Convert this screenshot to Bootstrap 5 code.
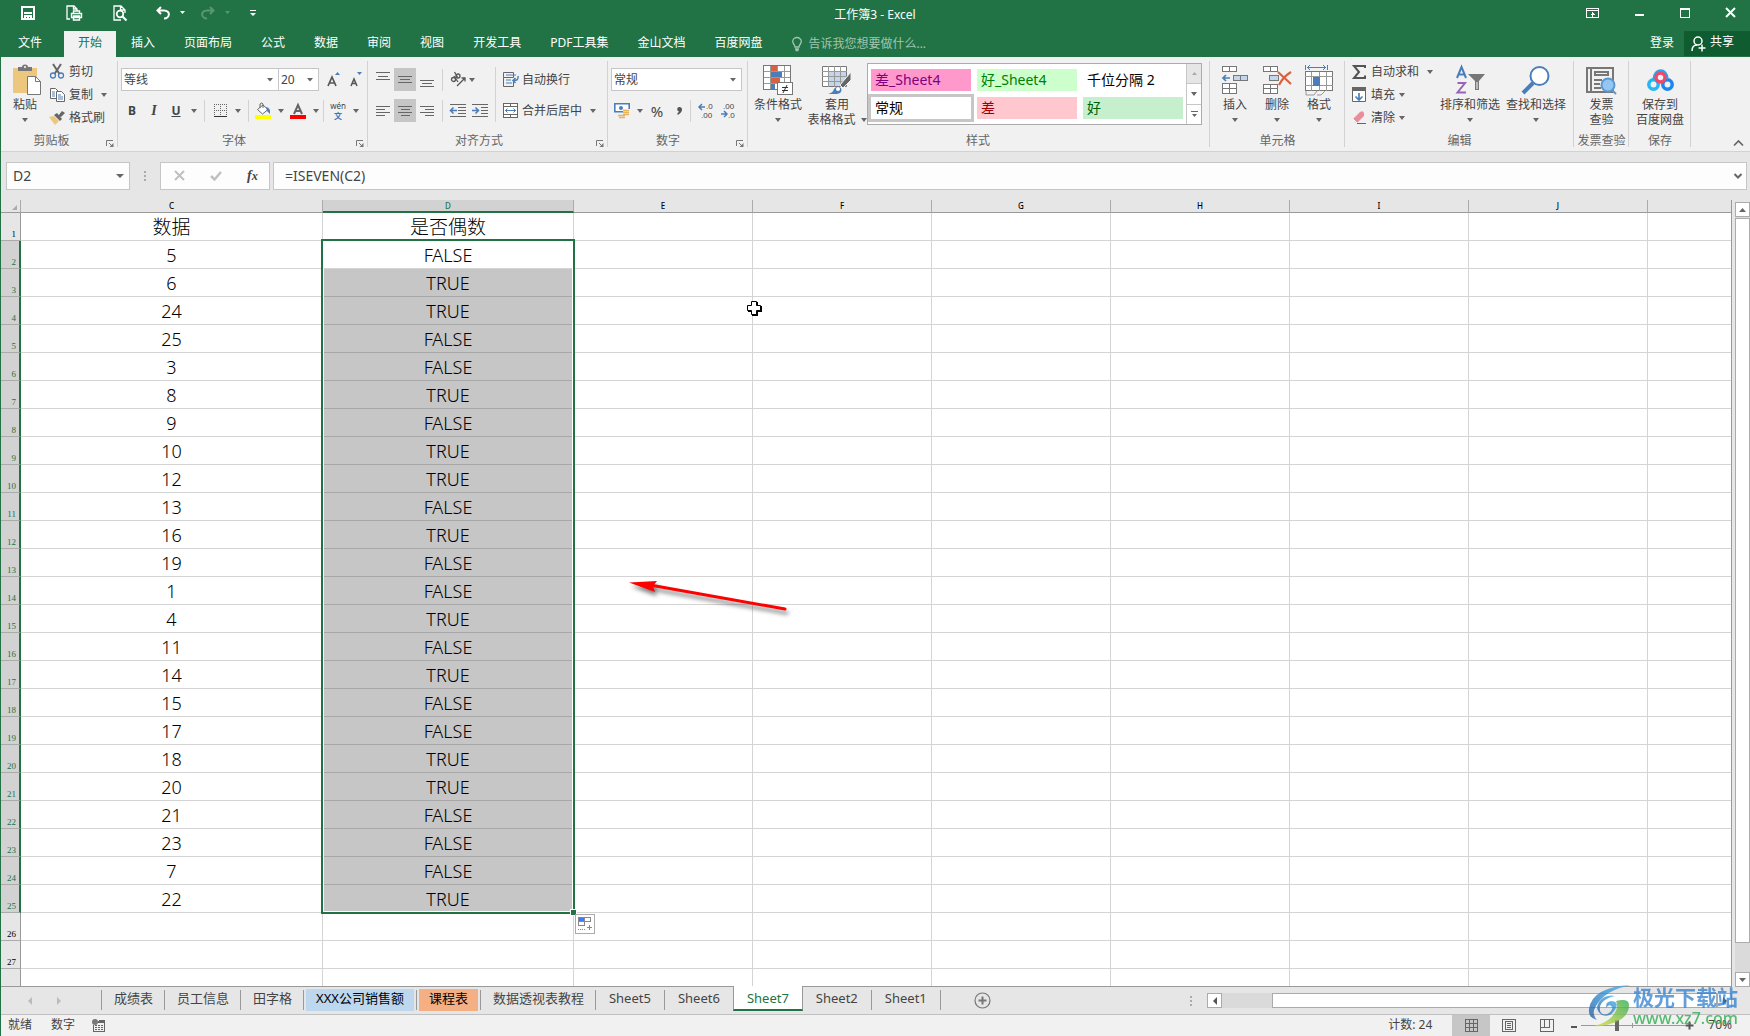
<!DOCTYPE html>
<html lang="zh-CN">
<head>
<meta charset="utf-8">
<meta name="viewport" content="width=device-width, initial-scale=1">
<title>工作簿3 - Excel</title>
<link rel="stylesheet" href="https://cdn.jsdelivr.net/npm/bootstrap@5.3.0/dist/css/bootstrap.min.css">
<style>
:root{--xl:#217346;--ln:#d4d4d4;--caret:url("data:image/svg+xml,%3Csvg xmlns='http://www.w3.org/2000/svg' width='6' height='4'%3E%3Cpath d='M0 0h6L3 3.5z' fill='%23666'/%3E%3C/svg%3E");--caret-lg:url("data:image/svg+xml,%3Csvg xmlns='http://www.w3.org/2000/svg' width='8' height='4'%3E%3Cpath d='M0 0h8L4 4z' fill='%23666'/%3E%3C/svg%3E")}
body{font:12px/16px "Noto Sans","Noto Sans CJK SC",sans-serif;color:#444;background:#e6e6e6;overflow:hidden}
button{border:0;background:none;padding:0;color:inherit;font:inherit}
svg{display:block;flex:none;overflow:visible}
.xl-top{background:var(--xl);color:#fff;flex:none}
.title-row{height:31px}
.quick{gap:16px;padding-left:21px;padding-bottom:5px}
.quick-files{gap:31px;margin-right:12px}
.quick button{height:16px}
.win{gap:34px;padding-right:14px;padding-bottom:5px}
.doc-title{left:50%;transform:translateX(-50%);top:7px}
.tabs-row{height:26px;padding-left:4px}
.xtab{padding:4px 14px;color:#fff;text-decoration:none;margin-right:1px;height:26px;white-space:nowrap}
.xtab.on{background:#f1f1f1;color:var(--xl)}
.tell{color:#a0c5b0;padding-left:15px;gap:6px}
.share{background:#0e5c2f;height:25px;width:66px;padding-left:7px;gap:5px}
.app-body{border-left:1px solid var(--xl);min-height:0}
.ribbon{background:#f1f1f1;height:95px;border-bottom:1px solid #d2d2d2;flex:none}
.grp{position:relative;flex:none;padding:3px 0 0;height:91px}
.grp::after{content:"";position:absolute;right:0;top:4px;height:86px;width:1px;background:#d2d2d2}
.g-body{height:73px}
.g-name{height:15px;color:#666;text-align:center}
.launch{position:absolute;right:4px;bottom:1px}
.big{display:flex;flex-direction:column;align-items:center;flex:none;text-align:center;line-height:15px}
.big .ico{height:33px;display:flex;align-items:center;padding-top:6px;margin-bottom:4px;justify-content:center}
.big .dn{height:15px;display:flex;align-items:center}
.sm{display:flex;align-items:center;height:23px;gap:4px;white-space:nowrap}
.sm .ic16{width:16px;display:flex;justify-content:center}
.cr{display:inline-block;width:0;height:0;border:3px solid transparent;border-top:4px solid #666;border-bottom:0;flex:none}
.tool-rows{padding-top:8px;gap:8px}
.tool-rows .rw{height:23px;display:flex;align-items:center}
.tb{height:23px;width:22px;display:flex;align-items:center;justify-content:center;flex:none}
.tb.nar{width:13px}.tb.slim{width:7px}.tb.wide{width:28px}
.tb.on{background:#c6c6c6}
.vsep{width:1px;background:#d2d2d2;height:22px;flex:none}
.fsel{appearance:none;height:23px;border:1px solid #c6c6c6;background:#fff var(--caret) no-repeat right 5px center;padding:0 2px;font:inherit;color:#444;border-radius:0}
.gallery{border:1px solid #ababab;background:#fff;width:335px;height:62px;margin:3px 0 0 1px}
.styles-grid{display:grid;grid-template-columns:repeat(3,106px);grid-template-rows:28px 28px;font-size:14px;padding-top:2px}
.sty{border:3px solid transparent;background-clip:padding-box;text-align:left;padding-left:4px;line-height:20px;color:#000}
.sty.bad4{background-color:#ff99cc;color:#800080}.sty.good4{background-color:#ccffcc;color:#008000}
.sty.bad{background-color:#ffc7ce;color:#9c0006}.sty.good{background-color:#c6efce;color:#006100}
.sty.cur{border-color:#c6c6c6;background:#fff}
.gal-nav{width:15px;border-left:1px solid #c6c6c6}
.gal-nav button{flex:1;display:flex;align-items:center;justify-content:center;border-bottom:1px solid #c6c6c6}
.fbar{height:48px;padding:10px 3px 0 5px;flex:none}
.fbox{height:28px;background-color:#fdfdfd;border:1px solid #c6c6c6;font-size:14px;color:#444;border-radius:0}
.namebox{background-image:var(--caret-lg);padding-left:6px;width:124px}
.sheet-wrap{flex:1 1 0;min-height:0}
.grid-pane{overflow:hidden;border-right:1px solid #999;border-bottom:1px solid #999}
.xgrid{table-layout:fixed;border-collapse:separate;border-spacing:0;width:100%}
.xgrid th,.xgrid td{padding:0;text-align:center;height:28px;border-right:1px solid var(--ln);border-bottom:1px solid var(--ln);line-height:26px;overflow:hidden}
.xgrid td{font-size:18px;font-weight:300;color:#000;background:#fff}
.xgrid td.cap{font-size:19px}
.xgrid thead th{height:13px;line-height:12px;font-size:8px;font-weight:500;color:#000;background:#e6e6e6;border-color:#ababab;border-bottom-color:#999}
.xgrid thead th.pick{background:#d2d2d2;color:var(--xl);border-bottom:2px solid var(--xl);line-height:11px}
.xgrid tbody th{font:9px/10px "Liberation Serif",serif;vertical-align:bottom;text-align:right;padding-right:4px;padding-bottom:1px;color:#000;background:#e6e6e6;border-color:#ababab;border-right-color:#999}
.xgrid tbody th.pick{background:#d2d2d2;color:var(--xl);border-right:2px solid var(--xl);padding-right:3px}
.xgrid td.sel{background:#c6c6c6;border-bottom-color:#a6a6a6}
.range{left:320px;top:39px;width:254px;height:675px;border:2px solid var(--xl);box-shadow:inset 0 0 0 1px #fff;pointer-events:none}
.handle{right:-4px;bottom:-4px;width:7px;height:7px;background:var(--xl);border:1px solid #fff}
.autofill{left:574px;top:714px;width:20px;height:20px;background:#fff;border:1px solid #ababab}
.ptr{left:745px;top:100px}
.redarrow{left:625px;top:376px}
.vbar{width:18px;padding:2px 0 0 3px}
.sbtn{width:15px;height:15px;border:1px solid #ababab;background:#fff;display:flex;align-items:center;justify-content:center;flex:none}
.thumb{background:#fff;border:1px solid #ababab}
.track{background:#dadada}
.sheetbar{height:28px;border-bottom:1px solid #c0c0c0;flex:none}
.stabs{height:27px;padding-top:3px}
.stab{height:20px;padding:0 11px 0 12px;border-left:1px solid #999;font-size:13px;line-height:17px;color:#444;text-decoration:none;white-space:nowrap}
.stab.lat{padding:0 13px}
.stab span{display:block}
.stab.tint{padding:0 2px}
.stab.tint span{height:22px;margin-top:-1px;line-height:19px;color:#000;padding:0 10px}
.stab.now{background:#fff;color:var(--xl);height:25px;margin-top:-4px;line-height:25px;border-right:1px solid #999;border-bottom:2px solid var(--xl);z-index:2}
.stab.noline{border-left:0}
.statusbar{background:#f1f1f1;height:21px;flex:none}
.statusbar span{padding-bottom:2px}
.view{width:38px;height:21px;display:flex;align-items:center;justify-content:center}
.view.on{background:#c6c6c6}
.zoomr{appearance:none;width:104px;height:11px;background:linear-gradient(#999,#999) 0 5px/100% 1px no-repeat,linear-gradient(#999,#999) 51px 3px/1px 5px no-repeat;margin:0}
.zoomr::-webkit-slider-thumb{appearance:none;width:4px;height:11px;background:#666}
.wmark{right:12px;bottom:9px;opacity:.75;gap:1px;pointer-events:none}
.wm-cn{font-size:21px;line-height:23px;font-weight:700;color:#2f7fd0}
.wm-en{font-size:16px;line-height:18px;color:#22a845;font-weight:500}
</style>
<script src="https://cdn.jsdelivr.net/npm/bootstrap@5.3.0/dist/js/bootstrap.bundle.min.js"></script>
</head>
<body class="vh-100 d-flex flex-column position-relative">
<header class="xl-top">
  <div class="title-row d-flex justify-content-between position-relative">
    <div class="quick d-flex align-items-center">
      <div class="quick-files d-flex align-items-center">
      <button aria-label="保存"><svg width="14" height="14" fill="none" stroke="#fff" stroke-width="2"><path d="M1 1h12v12H1zM3 7h8"/><path d="M4 13v-3h6v3M7 10v3" /></svg></button>
      <button aria-label="快速打印"><svg width="16" height="16" fill="none" stroke="#fff" stroke-width="1.3"><path d="M4 14H1V1h7l3 3v2M7.500 1v3H11"/><path d="M5.500 8.500h10v4h-10zM7.500 8V6h6v2M7.500 11h6v4h-6z" stroke-width="1.4"/></svg></button>
      <button aria-label="打印预览"><svg width="15" height="16" fill="none" stroke="#fff" stroke-width="1.300"><path d="M2 15H1V1h7l4 4v3M7.500 1v4H12M1 15h7"/><circle cx="7" cy="9" r="3.300" stroke-width="1.700"/><path d="M9.500 11.500l4 4" stroke-width="2.200"/></svg></button>
      </div>
      <div class="d-flex align-items-center" style="gap:10px"><button aria-label="撤消"><svg width="14" height="13" fill="none" stroke="#fff" stroke-width="2"><path d="M5 0L1.500 3.500 5 7M2 3.500h6c7 0 6 8 0 8"/></svg></button><svg width="5" height="4"><path d="M0 0h5L2.500 3z" fill="#fff"/></svg></div>
      <div class="d-flex align-items-center opacity-25" style="gap:10px"><button aria-label="恢复"><svg width="14" height="13" fill="none" stroke="#fff" stroke-width="2"><path d="M9 0l3.500 3.500L9 7M12 3.500H6c-7 0-6 8 0 8"/></svg></button><svg width="5" height="4"><path d="M0 0h5L2.500 3z" fill="#fff"/></svg></div>
      <button class="d-flex align-items-center ms-1" aria-label="自定义"><svg width="6" height="6" fill="#fff"><path d="M0 0h6v1H0zM0 3h6L3 6z"/></svg></button>
    </div>
    <div class="doc-title position-absolute">工作簿3 - Excel</div>
    <div class="win d-flex align-items-center">
      <button aria-label="功能区显示选项"><svg width="13" height="10" fill="none" stroke="#fff" shape-rendering="crispEdges"><path d="M.5.5h12v9H.5zM0 2.500h13M6.500 4v5M4.500 6.500h4M5.500 5.500h2"/></svg></button>
      <button aria-label="最小化"><svg width="12" height="10"><path d="M2 6h9v2H2z" fill="#fff"/></svg></button>
      <button aria-label="最大化"><svg width="12" height="10" fill="none" stroke="#fff" shape-rendering="crispEdges"><path d="M1.500.5h9v9h-9zM1 1.500h10"/></svg></button>
      <button aria-label="关闭"><svg width="11" height="10" stroke="#fff" stroke-width="2"><path d="M1 0l9 9M10 0L1 9"/></svg></button>
    </div>
  </div>
  <nav class="tabs-row d-flex">
    <a class="xtab me-2" href="#">文件</a><a class="xtab on" href="#">开始</a><a class="xtab" href="#">插入</a><a class="xtab" href="#">页面布局</a><a class="xtab" href="#">公式</a><a class="xtab" href="#">数据</a><a class="xtab" href="#">审阅</a><a class="xtab" href="#">视图</a><a class="xtab" href="#">开发工具</a><a class="xtab" href="#">PDF工具集</a><a class="xtab" href="#">金山文档</a><a class="xtab" href="#">百度网盘</a>
    <button class="tell d-flex align-items-center"><svg width="10" height="14" fill="none" stroke="#a0c5b0" stroke-width="1.300"><path d="M3 10C3 7.500.7 7 .7 4.500a4.300 4 0 0 1 8.600 0C9.300 7 7 7.500 7 10zM3 12h4M3.500 13.500h3"/></svg>告诉我您想要做什么...</button>
    <a class="xtab ms-auto px-0" href="#" style="margin-right:10px">登录</a>
    <button class="share d-flex align-items-center"><svg width="14" height="16" fill="none" stroke="#fff" stroke-width="1.500"><circle cx="7" cy="5" r="4"/><path d="M1 15c0-4 2-6 5-6M11 8.500v7M7.500 12h7"/></svg><span class="pb-1">共享</span></button>
  </nav>
</header>

<main class="app-body flex-grow-1 d-flex flex-column">
<section class="ribbon d-flex">
  <div class="grp" style="width:117px">
    <div class="g-body d-flex">
      <button class="big" style="width:48px"><span class="ico ps-1"><svg width="28" height="30"><path d="M0 3h24v25H0z" fill="#eec77f"/><path d="M5 6V2h4a3 2.500 0 0 1 6 0h4v4z" fill="#777"/><circle cx="12" cy="2" r="1" fill="#fff"/><path d="M14.500 11.500h8l5 5v13h-13z" fill="#fff" stroke="#777"/><path d="M22.500 11.500v5h5" fill="none" stroke="#777"/></svg></span>粘贴<span class="dn"><i class="cr"></i></span></button>
      <div>
        <button class="sm"><span class="ic16"><svg width="14" height="15" fill="none"><path d="M3 0l6.500 10M11 0L4.500 10" stroke="#666" stroke-width="2"/><circle cx="3" cy="11.500" r="2.500" stroke="#4a7ebb" stroke-width="1.300"/><circle cx="11" cy="11.500" r="2.500" stroke="#4a7ebb" stroke-width="1.300"/></svg></span>剪切</button>
        <button class="sm"><span class="ic16"><svg width="15" height="14" fill="#fff" stroke="#666"><path d="M.5.5h5l3 3v7h-8z"/><path d="M2 4h3M2 6h3M2 8h3" stroke="#4a7ebb"/><path d="M6.500 3.500h5l3 3v7h-8z"/><path d="M8 7h3M8 9h5M8 11h5" stroke="#4a7ebb"/></svg></span>复制<i class="cr ms-1"></i></button>
        <button class="sm"><span class="ic16"><svg width="16" height="14"><path d="M0 6l5-1 5 5-4 4z" fill="#eec77f"/><path d="M5 4l3-2 5 6-2 2z" fill="#666"/><path d="M9 5l4-5 3 2-4 4z" fill="#666"/></svg></span>格式刷</button>
      </div>
    </div>
    <div class="g-name" style="padding-right:16px">剪贴板</div><svg class="launch" width="8" height="7"><use href="#lau"/></svg>
  </div>

  <div class="grp" style="width:250px">
    <div class="g-body tool-rows d-flex flex-column" style="padding-left:3px">
      <div class="rw"><select class="fsel" style="width:158px" aria-label="字体"><option>等线</option></select><select class="fsel" style="width:41px;margin-left:-1px" aria-label="字号"><option>20</option></select>
        <button class="tb ms-1" aria-label="增大字号"><svg width="14" height="15"><path d="M1 14L5 5l4 9M2.500 11h5" stroke="#555" stroke-width="1.700" fill="none"/><path d="M8 3h5l-2.500-3z" fill="#4a7ebb"/></svg></button><button class="tb" aria-label="减小字号"><svg width="14" height="15"><path d="M2 14l3-7 3 7M3 11.500h4" stroke="#555" stroke-width="1.500" fill="none"/><path d="M8 0h5l-2.500 3z" fill="#4a7ebb"/></svg></button></div>
      <div class="rw"><button class="tb fw-bold">B</button><button class="tb fw-bold fst-italic" style="font-family:'Liberation Serif',serif;font-size:14px">I</button><button class="tb fw-bold text-decoration-underline">U</button><button class="tb nar" aria-label="下划线"><i class="cr"></i></button><i class="vsep mx-1"></i>
        <button class="tb" aria-label="边框"><svg width="13" height="13" fill="none" stroke="#666" shape-rendering="crispEdges"><path d="M.5 0v12M12.500 0v12M0 .5h13M6.500 0v12M0 6.500h13" stroke-dasharray="1 1"/><path d="M0 12.500h13" stroke="#333"/></svg></button><button class="tb nar" aria-label="边框选项"><i class="cr"></i></button><i class="vsep ms-1"></i>
        <button class="tb wide" aria-label="填充颜色"><svg width="16" height="16"><path d="M0 12h16v4H0z" fill="#ff0"/><path d="M2.500 6.500L8 2l5 4.500L7.500 11z" fill="#fff" stroke="#666"/><path d="M5 5V1q2-2 3 0v4" fill="none" stroke="#666"/><path d="M11 4q5 1 4 7l-3-3z" fill="#4a7ebb"/></svg></button><button class="tb slim" aria-label="填充选项"><i class="cr"></i></button>
        <button class="tb wide" aria-label="字体颜色"><svg width="16" height="16"><path d="M0 12h16v4H0z" fill="#f00"/><path d="M4 11l4-9 4 9M5.500 8h5" stroke="#666" stroke-width="2" fill="none"/></svg></button><button class="tb slim" aria-label="颜色选项"><i class="cr"></i></button><i class="vsep ms-1"></i>
        <button class="tb wide flex-column" style="font-size:8px;line-height:10px"><span>wén</span><b style="color:#3f75b5">文</b></button><button class="tb slim" aria-label="拼音选项"><i class="cr"></i></button></div>
    </div>
    <div class="g-name" style="padding-right:18px">字体</div><svg class="launch" width="8" height="7"><use href="#lau"/></svg>
  </div>

  <div class="grp" style="width:240px">
    <div class="g-body d-flex" style="padding-left:4px">
      <div class="tool-rows d-flex flex-column">
        <div class="rw"><button class="tb" aria-label="顶端对齐"><svg width="14" height="15" stroke="#666" shape-rendering="crispEdges"><path d="M0 .5h14M2 4.500h10M0 7.500h14"/></svg></button><button class="tb on" aria-label="垂直居中"><svg width="14" height="7" stroke="#666" shape-rendering="crispEdges"><path d="M0 .5h14M2 3.500h10M0 6.500h14"/></svg></button><button class="tb" aria-label="底端对齐"><svg width="14" height="15" stroke="#666" shape-rendering="crispEdges"><path d="M0 8.500h14M2 11.500h10M0 14.500h14"/></svg></button></div>
        <div class="rw"><button class="tb" aria-label="左对齐"><svg width="14" height="10" stroke="#666" shape-rendering="crispEdges"><path d="M0 .5h14M0 3.500h9M0 6.500h14M0 9.500h9"/></svg></button><button class="tb on" aria-label="居中"><svg width="14" height="10" stroke="#666" shape-rendering="crispEdges"><path d="M0 .5h14M3 3.500h9M0 6.500h14M3 9.500h9"/></svg></button><button class="tb" aria-label="右对齐"><svg width="14" height="10" stroke="#666" shape-rendering="crispEdges"><path d="M0 .5h14M5 3.500h9M0 6.500h14M5 9.500h9"/></svg></button></div>
      </div>
      <div class="tool-rows d-flex flex-column" style="width:57px;padding-left:4px">
        <div class="rw"><i class="vsep"></i><button class="tb ms-1" aria-label="方向"><svg width="16" height="15" fill="none" stroke="#555" stroke-width="1.300"><path d="M7 14l8-8M11.500 6H15v3.500"/><circle cx="3.500" cy="7.500" r="2"/><path d="M4 4l4 6"/><circle cx="8" cy="4" r="2"/><path d="M4.500 0l3 5"/></svg></button><i class="cr"></i></div>
        <div class="rw"><i class="vsep"></i><button class="tb ms-1" aria-label="减少缩进"><svg width="16" height="13" stroke="#666"><path d="M0 .5h16M8 3.500h8M8 6.500h8M8 9.500h8M0 12.500h16"/><path d="M0 6.500h7M3.500 3.500l-3 3 3 3" stroke="#4a7ebb" stroke-width="1.600" fill="none"/></svg></button><button class="tb" aria-label="增加缩进"><svg width="16" height="13" stroke="#666"><path d="M0 .5h16M9 3.500h7M9 6.500h7M9 9.500h7M0 12.500h16"/><path d="M0 6.500h7M3.500 3.500l3 3-3 3" stroke="#4a7ebb" stroke-width="1.600" fill="none"/></svg></button></div>
      </div>
      <i class="vsep" style="height:55px;margin-top:7px"></i>
      <div class="tool-rows d-flex flex-column" style="padding-left:7px">
        <button class="sm"><svg width="15" height="15" fill="none" stroke="#666"><path d="M.5.5h10v5H.5zM10.500 9.500v5H.5v-9"/><path d="M3 3h10M3 8h5M3 11h6" stroke="#4a7ebb"/><path d="M15 4q1 5-5 4.500M12.500 6L10 8.500l2.500 2.500" stroke="#4a7ebb" stroke-width="1.500"/></svg>自动换行</button>
        <button class="sm"><svg width="15" height="15" fill="#fff" stroke="#666" shape-rendering="crispEdges"><path d="M.5.5h14v14H.5zM0 3.500h15M0 11.500h15M7.500 0v3M7.500 12v3"/><path d="M2 7.500h11M4.500 5.500l-2 2 2 2M10.500 5.500l2 2-2 2" stroke="#4a7ebb" fill="none" shape-rendering="auto"/></svg>合并后居中<i class="cr ms-1"></i></button>
      </div>
    </div>
    <div class="g-name" style="padding-right:18px">对齐方式</div><svg class="launch" width="8" height="7"><use href="#lau"/></svg>
  </div>

  <div class="grp" style="width:140px">
    <div class="g-body tool-rows d-flex flex-column" style="padding-left:3px">
      <div class="rw"><select class="fsel" style="width:131px" aria-label="数字格式"><option>常规</option></select></div>
      <div class="rw"><button class="tb" aria-label="会计格式"><svg width="16" height="15"><path d="M.8.8h14.400v8H.8z" fill="#fff" stroke="#4a7ebb" stroke-width="1.600"/><circle cx="7" cy="5" r="2" fill="#4a7ebb"/><path d="M9 6h7v6H9zM4 11h7v4H4z" fill="#f1f1f1"/><path d="M9 7.500h6M9 9.500h6M9 11.500h6M4 12.500h7M5 14.500h6" stroke="#e8b45c" stroke-width="1.500"/></svg></button><button class="tb nar" aria-label="货币选项"><i class="cr"></i></button><button class="tb" style="font-size:15px">%</button><button class="tb" aria-label="千位分隔"><svg width="6" height="8"><path d="M3 0a2.500 2.500 0 0 1 3 3Q5.500 6 1.500 8V6Q3 5 3 4.500A2.300 2.300 0 0 1 3 0" fill="#555"/></svg></button><i class="vsep"></i>
        <button class="tb ms-1" aria-label="增加小数位数"><svg width="15" height="15" font-family="Liberation Sans" font-size="8" fill="#444"><path d="M0 4h6M3 1L0 4l3 3" stroke="#4a7ebb" stroke-width="1.500" fill="none"/><text x="7" y="6">.0</text><text x="2" y="15">.00</text></svg></button><button class="tb" aria-label="减少小数位数"><svg width="15" height="15" font-family="Liberation Sans" font-size="8" fill="#444"><path d="M0 11h6M3 8l3 3-3 3" stroke="#4a7ebb" stroke-width="1.500" fill="none"/><text x="2" y="6">.00</text><text x="7" y="15">.0</text></svg></button></div>
    </div>
    <div class="g-name" style="padding-right:20px">数字</div><svg class="launch" width="8" height="7"><use href="#lau"/></svg>
  </div>

  <div class="grp" style="width:462px">
    <div class="g-body d-flex">
      <button class="big" style="width:60px"><span class="ico"><svg width="30" height="30" fill="#fff" stroke="#999" shape-rendering="crispEdges"><path d="M.5.5h27v24H.5zM0 6.500h28M0 12.500h28M0 18.500h28M7.500 0v25M14.500 0v25M21.500 0v25"/><path stroke="none" fill="#d9613f" d="M8 1h6v5H8zM8 13h9v5H8z"/><path stroke="none" fill="#4a7ebb" d="M8 7h11v5H8zM8 19h4v5H8z"/><path d="M.5.5h27v24H.5z" fill="none" stroke="#777"/><path d="M14.500 17.500h15v12h-15z" stroke="#777"/><path d="M19 22.500h6M19 25.500h6M24 20l-4 8" stroke="#333" shape-rendering="auto"/></svg></span>条件格式<span class="dn"><i class="cr"></i></span></button>
      <button class="big" style="width:58px"><span class="ico"><svg width="30" height="28" fill="#fff" stroke="#999"><path d="M.5.5h24v20H.5z" stroke="#777"/><path fill="#c5d6ea" stroke="none" d="M7 6h17v14H7z"/><path d="M0 5.500h25M0 10.500h25M0 15.500h25M6.500 0v21M12.500 0v21M18.500 0v21"/><path d="M29 6v8l-8 8-3-3z" fill="#666" stroke="#f1f1f1"/><path d="M6 28q5-1 6-5 3-4 7-1 2 5-4 6z" fill="#4a7ebb" stroke="none"/><circle cx="16" cy="23" r="2" stroke="none"/></svg></span>套用<span class="dn text-nowrap" style="gap:5px">表格格式<i class="cr"></i></span></button>
      <div class="gallery d-flex justify-content-between">
        <div class="styles-grid"><button class="sty bad4">差_Sheet4</button><button class="sty good4">好_Sheet4</button><button class="sty">千位分隔 2</button><button class="sty cur">常规</button><button class="sty bad">差</button><button class="sty good">好</button></div>
        <div class="gal-nav d-flex flex-column"><button style="background:#e6e6e6" aria-label="上一行"><svg width="5" height="3"><path d="M0 3h5L2.500 0z" fill="#ababab"/></svg></button><button aria-label="下一行"><i class="cr"></i></button><button aria-label="其他" class="border-0"><svg width="7" height="7" fill="#666"><path d="M0 0h7v1H0zM1 3h5L3.500 6z"/></svg></button></div>
      </div>
    </div>
    <div class="g-name" style="padding-right:2px">样式</div>
  </div>

  <div class="grp" style="width:135px">
    <div class="g-body d-flex" style="padding-left:4px">
      <button class="big" style="width:42px"><span class="ico"><svg width="26" height="28" fill="#fff" stroke="#777" shape-rendering="crispEdges"><path d="M.5.5h14v5H.5zM7.500 0v6M.5 17.500h14v10H.5zM0 22.500h15M7.500 17v11"/><path d="M11.500 9.500h14v5h-14z" fill="#c5d6ea"/><path d="M18.500 9v6"/><path d="M1 12h7M4 9l-3 3 3 3" stroke="#4a7ebb" stroke-width="1.700" fill="none" shape-rendering="auto"/></svg></span>插入<span class="dn"><i class="cr"></i></span></button>
      <button class="big" style="width:42px"><span class="ico"><svg width="29" height="28" fill="#fff" stroke="#777" shape-rendering="crispEdges"><path d="M.5.500h14v5H.5zM7.500 0v6M.5 18.500h14v9H.5zM0 22.500h15M7.500 18v10"/><path d="M6.500 9.500h9v5h-9z" fill="#c5d6ea"/><path d="M15 6l13 12M28 6Q20 11 16 19" stroke="#d9613f" stroke-width="2.200" fill="none" shape-rendering="auto"/></svg></span>删除<span class="dn"><i class="cr"></i></span></button>
      <button class="big" style="width:42px"><span class="ico"><svg width="28" height="30" fill="#fff" stroke="#999" shape-rendering="crispEdges"><path d="M.5 6.500h27v19H.5z" stroke="#777"/><path d="M0 11.500h28M0 20.500h28M6.500 7v19M14.500 7v19M21.500 7v19"/><path d="M8 12h7v9H8z" fill="#4a7ebb" stroke="none"/><path d="M1 26v4h8l3-4M12 30h4l4-4" fill="none" shape-rendering="auto"/><path d="M.5 0v5M22.500 0v5M2 2.500h19M5 0L2.500 2.500 5 5M18 0l2.500 2.500L18 5" stroke="#4a7ebb" fill="none" shape-rendering="auto"/></svg></span>格式<span class="dn"><i class="cr"></i></span></button>
    </div>
    <div class="g-name">单元格</div>
  </div>

  <div class="grp" style="width:229px">
    <div class="g-body d-flex" style="padding-left:6px">
      <div style="width:86px">
        <button class="sm"><span class="ic16"><svg width="14" height="14"><path d="M13 3V1H2l5 6-5 6h11v-2.500" fill="none" stroke="#555" stroke-width="2"/></svg></span>自动求和<i class="cr ms-1"></i></button>
        <button class="sm"><span class="ic16"><svg width="14" height="15"><path d="M.5.5h13v14H.5z" fill="#fff" stroke="#666"/><path d="M0 0h14v4H0z" fill="#666"/><path d="M7 6v7M3.500 9.500L7 13l3.500-3.500" stroke="#4a7ebb" stroke-width="1.700" fill="none"/></svg></span>填充<i class="cr"></i></button>
        <button class="sm"><span class="ic16"><svg width="14" height="13"><path d="M1 8l7-7q3-2 4 1v3l-7 7H4z" fill="#ea8c9b"/><path d="M1 8l4 4" stroke="#fff"/><path d="M5 12.500h9" stroke="#666"/></svg></span>清除<i class="cr"></i></button>
      </div>
      <button class="big text-nowrap" style="width:66px"><span class="ico"><svg width="29" height="28"><path d="M1 12L5.500 1 10 12M2.500 8.500h6" stroke="#4a7ebb" stroke-width="2" fill="none"/><path d="M1.500 17h7.500l-7.500 9.500H10" stroke="#9a62b8" stroke-width="2" fill="none"/><path d="M12 8h17l-6 7v9h-4v-9z" fill="#777"/><path d="M20.500 16h1v7h-1z" fill="#fff"/></svg></span>排序和筛选<span class="dn"><i class="cr"></i></span></button>
      <button class="big text-nowrap" style="width:66px"><span class="ico"><svg width="28" height="28" fill="#fff" stroke="#4a7ebb"><circle cx="17.500" cy="10" r="9" stroke-width="2"/><path d="M11 17L1 27" stroke-width="4"/></svg></span>查找和选择<span class="dn"><i class="cr"></i></span></button>
    </div>
    <div class="g-name">编辑</div>
  </div>

  <div class="grp" style="width:55px">
    <div class="g-body"><button class="big w-100"><span class="ico"><svg width="31" height="28" fill="none" stroke="#777" stroke-width="2"><path d="M1 2h26v24H1zM5 2v24M9 6h13v3H9zM8 14h8M8 18h6M8 22h7"/><circle cx="22" cy="19" r="6.500" fill="#93c6f2" stroke="#5b98d0"/><path d="M26 24l4 4" stroke="#5b98d0"/></svg></span>发票<br>查验</button></div>
    <div class="g-name text-nowrap">发票查验</div>
  </div>
  <div class="grp" style="width:62px">
    <div class="g-body"><button class="big w-100"><span class="ico"><svg width="27" height="22" fill="none" stroke-width="3.500"><circle cx="6.500" cy="15.500" r="4.700" stroke="#24b8f5"/><circle cx="20.500" cy="15.500" r="4.700" stroke="#1c86f2"/><path d="M7 11q1-9 6.500-9T20 10" stroke="#27a4f5"/><circle cx="13.500" cy="8.500" r="4.500" stroke="#ef4a68"/></svg></span>保存到<br>百度网盘</button></div>
    <div class="g-name">保存</div>
  </div>
  <button class="ms-auto align-self-end" style="margin:0 7px 5px" aria-label="折叠功能区"><svg width="9" height="6" fill="none" stroke="#666" stroke-width="1.700"><path d="M0 5.500L4.500 1 9 5.500"/></svg></button>
</section>

<section class="fbar d-flex">
  <select class="fsel fbox namebox" aria-label="名称框"><option>D2</option></select>
  <svg class="mt-2" width="2" height="12" style="margin-left:14px;margin-right:14px" fill="#ababab"><path d="M0 1h2v2H0zM0 5h2v2H0zM0 9h2v2H0z"/></svg>
  <div class="fbox d-flex align-items-center" style="width:110px;padding-left:13px;gap:25px">
    <button aria-label="取消"><svg width="11" height="10" stroke="#c0c0c0" stroke-width="2"><path d="M1 0l9 9M10 0L1 9"/></svg></button>
    <button aria-label="输入"><svg width="12" height="10" fill="none" stroke="#c0c0c0" stroke-width="2.500"><path d="M1 5l3.500 3.500L11 1"/></svg></button>
    <button class="fst-italic fw-bold" style="font-family:'Liberation Serif',serif">f<small>x</small></button>
  </div>
  <div class="fbox flex-grow-1 d-flex align-items-center" style="margin-left:3px;padding:0 4px 0 11px"><input class="border-0 bg-transparent p-0 flex-grow-1" style="font:inherit;color:inherit" value="=ISEVEN(C2)" aria-label="编辑栏"><svg width="8" height="6" fill="none" stroke="#666" stroke-width="2"><path d="M.5 1L4 4.500 7.500 1"/></svg></div>
</section>

<section class="sheet-wrap d-flex">
  <div class="grid-pane flex-grow-1 position-relative">
    <table class="xgrid">
      <colgroup><col style="width:20px"><col style="width:302px"><col style="width:251px"><col style="width:179px"><col style="width:179px"><col style="width:179px"><col style="width:179px"><col style="width:179px"><col style="width:179px"><col></colgroup>
      <thead><tr><th><svg width="5" height="5" style="margin:3px 0 0 11px"><path d="M5 0v5H0z" fill="#ababab"/></svg></th><th>C</th><th class="pick">D</th><th>E</th><th>F</th><th>G</th><th>H</th><th>I</th><th>J</th><th class="border-end-0"></th></tr></thead>
      <tbody id="cells"></tbody>
    </table>
    <div class="range position-absolute"><div class="handle position-absolute"></div></div>
    <button class="autofill position-absolute" aria-label="自动填充选项"><svg width="14" height="14" style="margin:2px" fill="#fff" stroke="#888" shape-rendering="crispEdges"><path d="M.5.5h12v4H.5z"/><path d="M.5.5h6v4h-6z" fill="#3d7bff"/><path d="M.5 4.500h6v4h-6z"/><path d="M0 12.500h7" stroke-dasharray="1 1"/><path d="M9 10.500h5M11.500 8v5"/></svg></button>
    <svg class="ptr position-absolute" width="16" height="16"><path d="M6 2h6v4h4v6h-4v4H6v-4H2V6h4z" fill="#000"/><path d="M5.500 1.500h5v4h4v5h-4v4h-5v-4h-4v-5h4z" fill="#fff" stroke="#000"/></svg>
    <svg class="redarrow position-absolute" width="172" height="50"><g style="filter:drop-shadow(2px 4px 2px rgba(0,0,0,.5))"><path d="M24 9L159 33" stroke="#f00" stroke-width="3" stroke-linecap="round"/><path d="M3 6.500L31 5l-4 5 2 6z" fill="#f00"/></g></svg>
  </div>
  <div class="vbar d-flex flex-column">
    <button class="sbtn" aria-label="向上"><svg width="8" height="4"><path d="M0 4h7L3.500 0z" fill="#666"/></svg></button>
    <div class="track flex-grow-1 d-flex"><div class="thumb w-100" style="height:96%;margin-top:1px"></div></div>
    <button class="sbtn" aria-label="向下"><svg width="8" height="4"><path d="M0 0h7L3.500 4z" fill="#666"/></svg></button>
  </div>
</section>

<section class="sheetbar d-flex">
  <div class="d-flex align-items-center" style="width:100px;padding-left:27px;gap:25px"><svg width="4" height="8"><path d="M4 0v8L0 4z" fill="#bbb"/></svg><svg width="4" height="8"><path d="M0 0v8l4-4z" fill="#bbb"/></svg></div>
  <nav class="stabs d-flex">
    <a class="stab" href="#">成绩表</a><a class="stab" href="#">员工信息</a><a class="stab" href="#">田字格</a><a class="stab tint" href="#"><span style="background:#bdd7ee">XXX公司销售额</span></a><a class="stab tint" href="#"><span style="background:#f4b084">课程表</span></a><a class="stab" href="#">数据透视表教程</a><a class="stab lat" href="#">Sheet5</a><a class="stab lat" href="#">Sheet6</a><a class="stab lat now" href="#">Sheet7</a><a class="stab lat noline" href="#">Sheet2</a><a class="stab lat" href="#">Sheet1</a><i class="vsep" style="background:#999;height:20px"></i>
  </nav>
  <button style="margin-left:33px" aria-label="新工作表"><svg width="17" height="17" fill="none" stroke="#777"><circle cx="8.500" cy="8.500" r="7.500" stroke-width="1.200"/><path d="M8.500 4.500v8M4.500 8.500h8" stroke-width="2"/></svg></button>
  <div class="ms-auto d-flex align-items-center" style="padding-right:18px">
    <svg width="2" height="12" style="margin-right:15px" fill="#ababab"><path d="M0 1h2v2H0zM0 5h2v2H0zM0 9h2v2H0z"/></svg>
    <button class="sbtn" aria-label="向左"><svg width="4" height="8"><path d="M4 0v8L0 4z" fill="#555"/></svg></button>
    <div class="track" style="width:50px;height:15px"></div><div class="thumb" style="width:445px;height:15px"></div>
    <button class="sbtn" aria-label="向右"><svg width="4" height="8"><path d="M0 0v8l4-4z" fill="#555"/></svg></button>
  </div>
</section>
<footer class="statusbar d-flex align-items-center">
  <span style="padding-left:7px">就绪</span><span style="padding-left:19px">数字</span>
  <svg width="14" height="13" style="margin-left:17px" fill="none" stroke="#666" shape-rendering="crispEdges"><path d="M1.500 6v6.500h11v-11H7"/><path d="M6 2.500h7" stroke-width="2"/><path d="M3 6.500h8M3 8.500h8M3 10.500h8" stroke-dasharray="2 1"/><circle cx="3" cy="3" r="3" fill="#777" stroke="none" shape-rendering="auto"/></svg>
  <span class="ms-auto" style="margin-right:20px">计数: 24</span>
  <button class="view on" aria-label="普通"><svg width="13" height="13" fill="none" stroke="#666" shape-rendering="crispEdges"><path d="M.5.500h12v12H.5zM0 4.500h13M0 8.500h13M4.500 0v13M8.500 0v13"/></svg></button>
  <button class="view" aria-label="页面布局"><svg width="14" height="13" fill="none" stroke="#666" shape-rendering="crispEdges"><path d="M.5.5h13v12H.5zM3.500 2.500h7v8h-7zM5 4.500h4M5 6.500h4M5 8.500h4"/></svg></button>
  <button class="view" aria-label="分页预览"><svg width="14" height="13" fill="none" stroke="#666" shape-rendering="crispEdges"><path d="M.5.5h13v12H.5zM4.500 0v8M9.500 0v8M0 8.500h10"/></svg></button>
  <button style="margin-left:5px" aria-label="缩小"><svg width="7" height="8"><path d="M0 4h6v2H0z" fill="#555"/></svg></button>
  <input class="zoomr" style="margin-left:3px" type="range" min="10" max="210" value="78" aria-label="缩放">
  <button aria-label="放大"><svg width="9" height="9" stroke="#555" stroke-width="2"><path d="M4.500.5v8M.5 4.500h8"/></svg></button>
  <span style="padding-left:14px;padding-right:18px">70%</span>
</footer>
</main>

<div class="wmark position-absolute d-flex align-items-center">
  <svg width="44" height="42"><defs><linearGradient id="wb" x1="0" y1="1" x2="1" y2="0"><stop offset="0" stop-color="#1559a8"/><stop offset="1" stop-color="#3fb4f0"/></linearGradient><linearGradient id="wg" x1="0" y1="1" x2="1" y2="0"><stop offset="0" stop-color="#e0dc3c"/><stop offset="1" stop-color="#22a845"/></linearGradient></defs><path d="M43 0Q4 2 1 24q-1 9 8 11Q3 29 8 21 17 5 43 0z" fill="url(#wb)"/><path d="M27 11Q10 15 12 26q3 6 9 2 6-5 1-8-4 1-3 4-3-7 4-8 8 0 5 7-5 10-14 7-8-5-3-13Q17 9 27 11z" fill="url(#wb)"/><path d="M28 16q13-3 13 4 0 14-19 19-9 3-16 2 15-4 20-12 5-7 2-13z" fill="url(#wg)"/></svg>
  <div><div class="wm-cn">极光下载站</div><div class="wm-en">www.xz7.com</div></div>
</div>
<svg width="0" height="0" class="position-absolute"><defs><g id="lau" fill="none" stroke="#777"><path d="M.5 6V.5H7M3 3l3 3"/><path d="M7.500 3v4H3.500z" fill="#777" stroke="none"/></g></defs></svg>
<script>
const nums = [5,6,24,25,3,8,9,10,12,13,16,19,1,4,11,14,15,17,18,20,21,23,7,22];
let html = '';
for (let r = 1; r <= 28; r++) {
  const n = nums[r - 2], inRange = n !== undefined;
  const c = r === 1 ? '数据' : inRange ? n : '';
  const d = r === 1 ? '是否偶数' : inRange ? (n % 2 ? 'FALSE' : 'TRUE') : '';
  const cls = r === 1 ? ' class="cap"' : '';
  html += `<tr><th${inRange ? ' class="pick"' : ''}>${r < 28 ? r : ''}</th><td${cls}>${c}</td><td${inRange && r > 2 ? ' class="sel"' : cls}>${d}</td>${'<td></td>'.repeat(6)}<td class="border-end-0"></td></tr>`;
}
document.getElementById('cells').innerHTML = html;
</script>
</body>
</html>
